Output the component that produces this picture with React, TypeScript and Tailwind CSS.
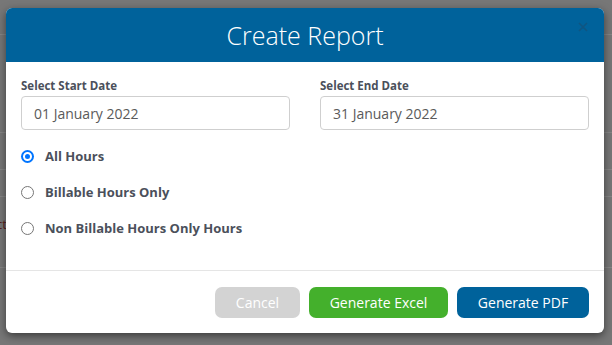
import React from "react";

function Radio({ checked, label }: { checked?: boolean; label: string }) {
  return (
    <div className="flex items-center h-[20px] gap-[11px]">
      {checked ? (
        <span className="w-[13px] h-[13px] rounded-full bg-[#0075ff] flex items-center justify-center">
          <span className="w-[9px] h-[9px] rounded-full border-[2px] border-white bg-[#0075ff]" />
        </span>
      ) : (
        <span className="w-[13px] h-[13px] rounded-full border border-[#767676] bg-white" />
      )}
      <span className="text-[13px] font-bold text-[#4b505b] leading-[18px]">{label}</span>
    </div>
  );
}

export default function App() {
  return (
    <div className="relative w-[612px] h-[345px] overflow-hidden bg-[#777777] font-['Open_Sans',sans-serif]">
      {/* page behind the overlay */}
      <div className="flex flex-col">
        <div className="h-[35px] border-b border-[#868686]" />
        <div className="h-[98px] border-b border-[#868686]" />
        <div className="h-[37px] border-b border-[#868686]" />
        <div className="h-[27px] border-b border-[#868686]" />
        <div className="h-[71px] border-b border-[#868686] pt-[19px]">
          <span className="block text-[13px] leading-[16px] text-[#5a2020] -ml-[4px]">ctl</span>
        </div>
      </div>

      {/* modal */}
      <div className="absolute left-[6px] top-[8px] w-[598px] h-[325px] rounded-[6px] bg-white shadow-[0_3px_9px_rgba(0,0,0,0.5)] flex flex-col overflow-hidden">
        <div className="relative h-[54px] bg-[#00629b] flex items-center justify-center shrink-0">
          <span className="text-[25px] font-light text-white leading-[30px]">Create Report</span>
          <span className="absolute left-[572px] top-[14px] w-[10px] h-[10px]">
            <svg viewBox="0 0 10 10" width="10" height="10">
              <path d="M1 1 L9 9 M9 1 L1 9" stroke="#1c4a6e" strokeOpacity="0.55" strokeWidth="1.6" />
            </svg>
          </span>
        </div>

        <div className="flex-1 px-[15px] pt-[16px]">
          <div className="grid grid-cols-2 gap-x-[30px]">
            <div className="flex flex-col gap-[2px]">
              <label className="text-[11.5px] font-bold text-[#4b505b] leading-[16px]">Select Start Date</label>
              <div className="h-[34px] rounded-[4px] border border-[#cfcfcf] flex items-center px-[12px] text-[14px] text-[#5a5a5a]">
                01 January 2022
              </div>
            </div>
            <div className="flex flex-col gap-[2px]">
              <label className="text-[11.5px] font-bold text-[#4b505b] leading-[16px]">Select End Date</label>
              <div className="h-[34px] rounded-[4px] border border-[#cfcfcf] flex items-center px-[12px] text-[14px] text-[#5a5a5a]">
                31 January 2022
              </div>
            </div>
          </div>
          <div className="mt-[16px] flex flex-col gap-[16px]">
            <Radio checked label="All Hours" />
            <Radio label="Billable Hours Only" />
            <Radio label="Non Billable Hours Only Hours" />
          </div>
        </div>

        <div className="border-t border-[#e5e5e5] h-[63px] shrink-0 px-[15px] flex items-center justify-end gap-[9px]">
          <button className="w-[85px] h-[31px] rounded-[7px] bg-[#d3d3d3] text-white text-[14px]">Cancel</button>
          <button className="w-[139px] h-[31px] rounded-[7px] bg-[#44b02c] text-white text-[14px]">Generate Excel</button>
          <button className="w-[132px] h-[31px] rounded-[7px] bg-[#00629b] text-white text-[14px]">Generate PDF</button>
        </div>
      </div>
    </div>
  );
}
